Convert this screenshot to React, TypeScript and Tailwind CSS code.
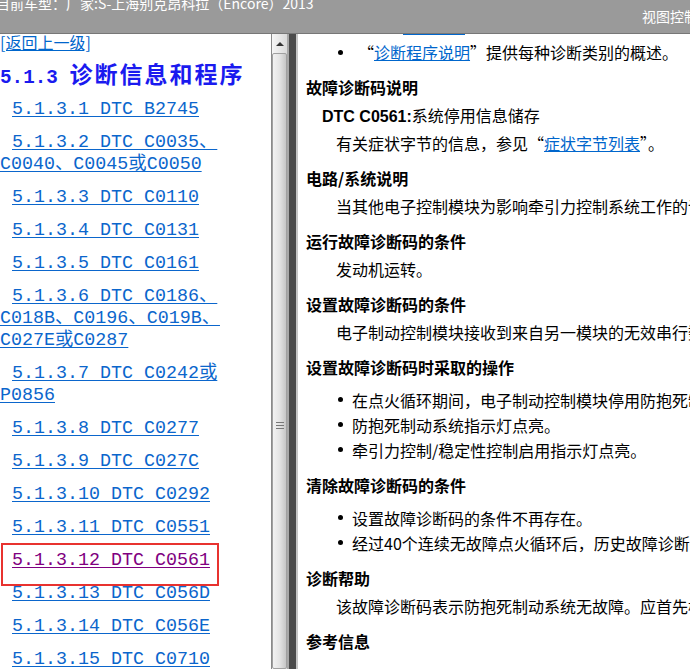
const mono = "font-['Liberation_Mono','Noto_Sans_CJK_SC',monospace]"
const sans = "font-['Noto_Sans_CJK_SC','Liberation_Sans',sans-serif]"

const items: { lines: string[]; visited?: boolean }[] = [
  { lines: ['5.1.3.1 DTC B2745'] },
  { lines: ['5.1.3.2 DTC C0035、 ', 'C0040、C0045或C0050'] },
  { lines: ['5.1.3.3 DTC C0110'] },
  { lines: ['5.1.3.4 DTC C0131'] },
  { lines: ['5.1.3.5 DTC C0161'] },
  { lines: ['5.1.3.6 DTC C0186、 ', 'C018B、C0196、C019B、 ', 'C027E或C0287'] },
  { lines: ['5.1.3.7 DTC C0242或 ', 'P0856'] },
  { lines: ['5.1.3.8 DTC C0277'] },
  { lines: ['5.1.3.9 DTC C027C'] },
  { lines: ['5.1.3.10 DTC C0292'] },
  { lines: ['5.1.3.11 DTC C0551'] },
  { lines: ['5.1.3.12 DTC C0561'], visited: true },
  { lines: ['5.1.3.13 DTC C056D'] },
  { lines: ['5.1.3.14 DTC C056E'] },
  { lines: ['5.1.3.15 DTC C0710'] },
]

function Heading({ children }: { children: React.ReactNode }) {
  return <div className="mt-[11px] ml-2 h-6 leading-6 text-[16px] font-bold text-black">{children}</div>
}

function Body({ children }: { children: React.ReactNode }) {
  return <div className="mt-1 ml-[38px] h-6 leading-6 text-[16px] text-black whitespace-nowrap">{children}</div>
}

function Dot() {
  return (
    <span className="w-[14px] shrink-0 flex items-center">
      <span className="w-[5px] h-[5px] rounded-full bg-black" />
    </span>
  )
}

function Bullet({ children }: { children: React.ReactNode }) {
  return (
    <div className="flex items-center h-[25px] ml-[40px] text-[16px] text-black whitespace-nowrap">
      <Dot />
      <span>{children}</span>
    </div>
  )
}

export default function App() {
  return (
    <div className="w-[690px] h-[669px] overflow-hidden flex flex-col bg-white">
      {/* top bar, scrolled a bit so the first line is cut */}
      <div className={`h-[34px] shrink-0 bg-[#9a9a9a] border-b border-[#777] flex justify-between overflow-hidden text-white text-[14px] ${sans}`}>
        <span className="-mt-[7px] -ml-[4px] leading-5 whitespace-nowrap">目前车型：广家:S-上海别克昂科拉（Encore）2013</span>
        <span className="mt-[6px] leading-5 whitespace-nowrap -mr-[8px]">视图控制</span>
      </div>

      <div className="flex flex-1 overflow-hidden">
        {/* left tree */}
        <div className={`w-[271px] shrink-0 overflow-hidden ${mono}`}>
          <a className={`block leading-[17px] text-[16px] text-[#0066cc] underline ${sans} w-fit`}>[返回上一级]</a>
          <div className="mt-2 leading-7 font-bold text-[#1a1aef] whitespace-nowrap">
            <span className="text-[19.3px]">5.1.3 </span>
            <span className={`text-[23px] tracking-[2px] ${sans}`}>诊断信息和程序</span>
          </div>
          <div className="mt-[6px]">
            {items.map((it, i) => (
              <p key={i} className={`relative indent-3 leading-[22px] text-[18.33px] ${i ? 'mt-[11px]' : ''}`}>
                <a className={`underline underline-offset-2 ${it.visited ? 'text-[#800080]' : 'text-[#0b66cc]'}`}>
                  {it.lines.map((l, j) => (
                    <span key={j}>
                      {j > 0 && <br />}
                      {l}
                    </span>
                  ))}
                </a>
                {it.visited && (
                  <span className="absolute left-px -top-[7px] w-[218px] h-[43px] border-2 border-[#e8322f]" />
                )}
              </p>
            ))}
          </div>
        </div>

        {/* scrollbar */}
        <div className="w-[16px] shrink-0 flex flex-col border-l border-[#8a8a8a] bg-linear-to-r from-[#f6f6f6] to-[#dadada]">
          <div className="h-[19px] flex items-center justify-center">
            <div className="w-0 h-0 border-l-[4px] border-r-[4px] border-b-[4px] border-l-transparent border-r-transparent border-b-[#333]" />
          </div>
          <div className="flex-1 border border-[#a0a0a0] rounded-[2px] bg-linear-to-r from-[#f2f2f2] via-[#e4e4e4] to-[#c6c6c6] pt-[368px] flex justify-center">
            <div className="flex flex-col gap-[2px] h-fit">
              <div className="w-[8px] h-px bg-[#777]" />
              <div className="w-[8px] h-px bg-[#777]" />
              <div className="w-[8px] h-px bg-[#777]" />
            </div>
          </div>
        </div>

        {/* splitter */}
        <div className="w-[11px] shrink-0 flex">
          <div className="w-[2px] bg-[#a8a8a8]" />
          <div className="w-[7px] bg-[#4b4b4b]" />
          <div className="w-[2px] bg-[#c6c6c6]" />
        </div>

        {/* right content */}
        <div className={`flex-1 overflow-hidden ${sans}`}>
          <div className="ml-[105px] w-[62px] h-px bg-[#0066cc]" />
          <div className="mt-[5px] flex items-center h-6 ml-[40px] text-[16px] text-black whitespace-nowrap">
            <span className="w-[20px] shrink-0 flex items-center">
              <span className="w-[5px] h-[5px] rounded-full bg-black" />
            </span>
            <span>“<a className="text-[#0066cc] underline">诊断程序说明</a>”提供每种诊断类别的概述。</span>
          </div>

          <Heading>故障诊断码说明</Heading>
          <div className="mt-1 ml-6 h-6 leading-6 text-[16px] text-black whitespace-nowrap">
            <span className="font-bold font-['Liberation_Sans',sans-serif]">DTC C0561:</span>系统停用信息储存
          </div>
          <Body>
            有关症状字节的信息，参见“<a className="text-[#0066cc] underline">症状字节列表</a>”。
          </Body>

          <Heading>电路/系统说明</Heading>
          <Body>当其他电子控制模块为影响牵引力控制系统工作的请求信号时</Body>

          <Heading>运行故障诊断码的条件</Heading>
          <Body>发动机运转。</Body>

          <Heading>设置故障诊断码的条件</Heading>
          <Body>电子制动控制模块接收到来自另一模块的无效串行数据。</Body>

          <Heading>设置故障诊断码时采取的操作</Heading>
          <div className="mt-2">
            <Bullet>在点火循环期间，电子制动控制模块停用防抱死制动系统。</Bullet>
            <Bullet>防抱死制动系统指示灯点亮。</Bullet>
            <Bullet>牵引力控制/稳定性控制启用指示灯点亮。</Bullet>
          </div>

          <Heading>清除故障诊断码的条件</Heading>
          <div className="mt-2">
            <Bullet>设置故障诊断码的条件不再存在。</Bullet>
            <Bullet>经过40个连续无故障点火循环后，历史故障诊断码将被清除。</Bullet>
          </div>

          <Heading>诊断帮助</Heading>
          <Body>该故障诊断码表示防抱死制动系统无故障。应首先检查其他模块。</Body>

          <Heading>参考信息</Heading>
        </div>
      </div>
    </div>
  )
}
